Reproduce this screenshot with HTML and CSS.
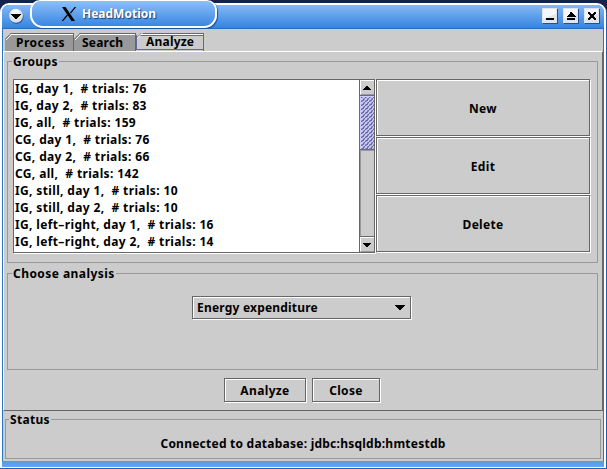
FILE: index.html
```html
<!DOCTYPE html>
<html lang="en">
<head>
<meta charset="utf-8">
<title>HeadMotion</title>
<link rel="stylesheet" href="styles.css">
</head>
<body>
<div class="window">
  <header class="titlebar">
    <svg class="orb" width="16" height="16" viewBox="0 0 16 16"><circle cx="8.5" cy="8.8" r="7" fill="#1d5295"/><circle cx="8" cy="7.8" r="7" fill="#dcdfe4"/><circle cx="7.5" cy="5.5" r="4.5" fill="#f5f6f8"/><path d="M3 6h10v1h-1v1h-1v1h-1v1H9v1H7v-1H6V9H5V8H4V7H3z" fill="#000"/></svg>
    <div class="caption">
      <svg class="xlogo" width="14" height="14" viewBox="0 0 14 14"><path d="M0 0h3.5l9.5 14H9.5z" fill="#000"/><path d="M12.5 0h1L8.5 6M5.5 8L.8 13.5H0" fill="none" stroke="#000" stroke-width="1.2"/></svg>
      <h1>HeadMotion</h1>
    </div>
    <div class="controls">
      <svg width="16" height="16" viewBox="0 0 16 16"><path d="M1 1h15v15H1z" fill="#1d5295"/><path d="M0 0h15v15H0z" fill="#e0e4ec"/><path d="M1 1h13v5L1 11z" fill="#f5f7fa"/><path d="M4 10h8v2H4z"/></svg>
      <svg width="16" height="16" viewBox="0 0 16 16"><path d="M1 1h15v15H1z" fill="#1d5295"/><path d="M0 0h15v15H0z" fill="#e0e4ec"/><path d="M1 1h13v5L1 11z" fill="#f5f7fa"/><path d="M7 4h2v1h1v1h1v1h1v1h1v1H4V8h1V7h1V6h1zM4 10h8v2H4z"/></svg>
      <svg width="16" height="16" viewBox="0 0 16 16"><path d="M1 1h15v15H1z" fill="#1d5295"/><path d="M0 0h15v15H0z" fill="#e0e4ec"/><path d="M1 1h13v5L1 11z" fill="#f5f7fa"/><path d="M4 4h2v1h1v1h2V5h1V4h2v2h-1v1h-1v2h1v1h1v2h-2v-1H9v-1H7v1H6v1H4v-2h1V9h1V7H5V6H4z"/></svg>
    </div>
  </header>
  <div class="content">
    <nav class="tabs">
      <div class="tab process"><svg width="7" height="7" viewBox="0 0 7 7"><path d="M0 0h6L0 6z" fill="#ccc"/><path d="M0 6.5L6.5 0" stroke="#666"/><path d="M1 7L7 1" stroke="#fff"/></svg><span>Process</span></div>
      <div class="tab search"><svg width="7" height="7" viewBox="0 0 7 7"><path d="M0 0h6L0 6z" fill="#ccc"/><path d="M0 6.5L6.5 0" stroke="#666"/><path d="M1 7L7 1" stroke="#fff"/></svg><span>Search</span></div>
      <div class="tab analyze active"><svg width="7" height="7" viewBox="0 0 7 7"><path d="M0 0h6L0 6z" fill="#ccc"/><path d="M0 5.5L5.5 0" stroke="#666"/><path d="M0 6.5L6.5 0" stroke="#fff"/></svg><span>Analyze</span></div>
    </nav>
    <main class="pane">
      <section class="group groups">
        <h2 class="t-groups">Groups</h2>
        <div class="row">
          <div class="listbox">
            <ul>
              <li>IG, day 1,&nbsp; # trials: 76</li>
              <li>IG, day 2,&nbsp; # trials: 83</li>
              <li>IG, all,&nbsp; # trials: 159</li>
              <li>CG, day 1,&nbsp; # trials: 76</li>
              <li>CG, day 2,&nbsp; # trials: 66</li>
              <li>CG, all,&nbsp; # trials: 142</li>
              <li>IG, still, day 1,&nbsp; # trials: 10</li>
              <li>IG, still, day 2,&nbsp; # trials: 10</li>
              <li>IG, left–right, day 1,&nbsp; # trials: 16</li>
              <li>IG, left–right, day 2,&nbsp; # trials: 14</li>
            </ul>
            <div class="scrollbar">
              <div class="arrow"><svg width="8" height="4" viewBox="0 0 8 4"><path d="M3 0h2v1h1v1h1v1h1v1H0V3h1V2h1V1h1z"/></svg></div>
              <div class="thumb"></div>
              <div class="track"></div>
              <div class="arrow"><svg width="8" height="4" viewBox="0 0 8 4"><path d="M0 0h8v1H7v1H6v1H5v1H3V3H2V2H1V1H0z"/></svg></div>
            </div>
          </div>
          <div class="actions">
            <button>New</button>
            <button>Edit</button>
            <button>Delete</button>
          </div>
        </div>
      </section>
      <section class="group choose">
        <h2 class="t-choose">Choose analysis</h2>
        <button class="combo"><span>Energy expenditure</span><svg width="10" height="5" viewBox="0 0 10 5"><path d="M0 0h10v1H9v1H8v1H7v1H6v1H4V4H3V3H2V2H1V1H0z"/></svg></button>
      </section>
      <div class="buttons"><button class="b-analyze">Analyze</button><button class="b-close">Close</button></div>
    </main>
    <section class="group status">
      <h2 class="t-status">Status</h2>
      <p>Connected to database: jdbc:hsqldb:hmtestdb</p>
    </section>
  </div>
  <div class="grip"></div>
</div>
</body>
</html>
```
FILE: styles.css
```css
* { box-sizing: border-box; }
body {
  margin: 0;
  width: 607px;
  height: 469px;
  overflow: hidden;
  background: #14224c;
  font: bold 12px/17px "Noto Sans", "Open Sans", sans-serif;
  color: #000;
  letter-spacing: 0.2px;
}
svg { display: block; flex: none; }
h1, h2, p, ul { margin: 0; padding: 0; }
.window {
  margin-top: 3px;
  height: 465px;
  border: solid #fff;
  border-width: 2px 2px 1px;
  border-radius: 9px 9px 0 0;
  width: 606px;
  box-shadow: 1px 1px #1d62b0, 0 1px #1d62b0;
  display: flex;
  flex-direction: column;
  background: #2a77c8;
}
.titlebar {
  height: 24px;
  flex: none;
  display: flex;
  background: linear-gradient(#85b9f4, #3484e0);
  border-bottom: 1px solid #2a6dbd;
  border-radius: 7px 7px 0 0;
}
.orb { margin: 3px 0 0 6px; }
.caption {
  margin: -5px 0 0 6px;
  width: 187px;
  height: 28px;
  border: 2px solid #fff;
  border-top-width: 1px;
  border-radius: 10px 10px 13px 13px;
  background: linear-gradient(#8cbff7, #3987e2);
  box-shadow: 1px 1px 1px #1d5295;
  display: flex;
  padding: 6px 0 0 30px;
}
h1 {
  margin: -3px 0 0 6px;
  font: bold 12px/20px "Noto Sans", sans-serif;
  letter-spacing: 0;
  color: #fff;
  text-shadow: 1px 1px 1px #173e75;
  white-space: nowrap;
}
.controls { display: flex; gap: 5px; margin: 3px 4px 0 auto; }
.content {
  height: 432px;
  flex: none;
  margin: 0 0 0 1px;
  width: 600px;
  background: #ccc;
  padding-top: 4px;
}
.tabs { display: flex; height: 18px; padding-left: 2px; }
.tab {
  height: 18px;
  display: flex;
  background: linear-gradient(#666 0 1px, #fff 1px 2px, #999 2px);
  border-right: 1px solid #666;
}
.tab span { margin-left: 4px; line-height: 20px; }
.process { width: 69px; }
.process span { letter-spacing: 0.5px; }
.tab.process span { margin-left: 4px; }
.tab.search span { margin-left: 1px; }
.search { width: 62px; }
.active {
  width: 68px;
  background: linear-gradient(#666 0 1px, #fff 1px 2px, #669 2px 3px, #ccc 3px 16px, #669 16px 17px, #ccc 17px);
  border-right-color: #669;
}
.active svg { margin-right: -7px; }
.tab.active span {
  flex: 1;
  height: 15px;
  margin: 2px 0 0;
  padding-left: 9px;
  line-height: 14px;
  border-left: 1px solid #669;
}
.pane {
  height: 360px;
  border: 1px solid #fff;
  border-right-color: #666;
  border-bottom-color: #666;
  padding: 9px 4px 0 3px;
}
.group { border: 1px solid #999; }
h2 {
  font: inherit;
  width: fit-content;
  height: 17px;
  margin: -9px 0 0 4px;
  padding: 0 1px;
  background: #ccc;
  white-space: nowrap;
}
.t-groups { letter-spacing: 0.35px; }
.t-choose { letter-spacing: 0.45px; }
.t-status { margin-left: 3px; letter-spacing: 0.3px; }
.groups { height: 202px; width: 591px; }
.row { display: flex; margin: 9px 0 0 5px; }
.listbox {
  width: 362px;
  height: 174px;
  margin-right: 1px;
  display: flex;
  border: 1px solid #666;
  box-shadow: 1px 1px #fff;
  background: #fff;
}
ul { list-style: none; width: 345px; letter-spacing: 0.36px; }
li { height: 17px; padding-left: 1px; white-space: nowrap; }
.scrollbar {
  width: 15px;
  border-left: 1px solid #666;
  background: #ccc;
  display: flex;
  flex-direction: column;
}
.arrow {
  height: 15px;
  padding: 5px 0 0 2px;
  border: 1px solid #fff;
  border-right: 0;
  border-bottom-color: #999;
}
.thumb {
  height: 55px;
  margin-left: -1px;
  border: 1px solid #669;
  border-right: 0;
  box-shadow: inset 1px 1px #ccf;
  background:
    radial-gradient(circle at 1px 1px, #ccf 0.7px, transparent 0.8px) 1px 2px / 4px 4px,
    radial-gradient(circle at 1px 1px, #669 0.7px, transparent 0.8px) 2px 3px / 4px 4px,
    radial-gradient(circle at 1px 1px, #ccf 0.7px, transparent 0.8px) 3px 4px / 4px 4px,
    radial-gradient(circle at 1px 1px, #669 0.7px, transparent 0.8px) 4px 5px / 4px 4px,
    #99c;
}
.track { flex: 1; border-left: 1px solid #999; border-top: 1px solid #999; border-bottom: 1px solid #666; }
button {
  font: inherit;
  color: inherit;
  padding: 0;
  border: 1px solid #666;
  border-radius: 0;
  background: #ccc;
  box-shadow: inset 1px 1px #fff, 1px 1px #fff;
  letter-spacing: inherit;
}
.actions { display: flex; flex-direction: column; gap: 1px; width: 214px; }
.actions button { height: 57px; padding-top: 2px; letter-spacing: 0.3px; }
.choose { height: 97px; width: 591px; margin-top: 10px; }
.combo {
  display: flex;
  align-items: center;
  width: 219px;
  height: 23px;
  margin: 14px 0 0 184px;
}
.combo span { margin-left: 4px; width: 198px; text-align: left; }
.buttons { display: flex; gap: 6px; margin: 8px 0 0 217px; }
.buttons button { height: 24px; padding-top: 1px; letter-spacing: 0.35px; }
.b-analyze { width: 82px; }
.b-close { width: 68px; }
.status { margin: 8px 0 0 2px; width: 596px; height: 40px; }
.status p { margin-top: 7px; text-align: center; letter-spacing: 0.24px; }
.grip { height: 6px; flex: none; background: linear-gradient(#5597e2, #62a8f6); }
```
